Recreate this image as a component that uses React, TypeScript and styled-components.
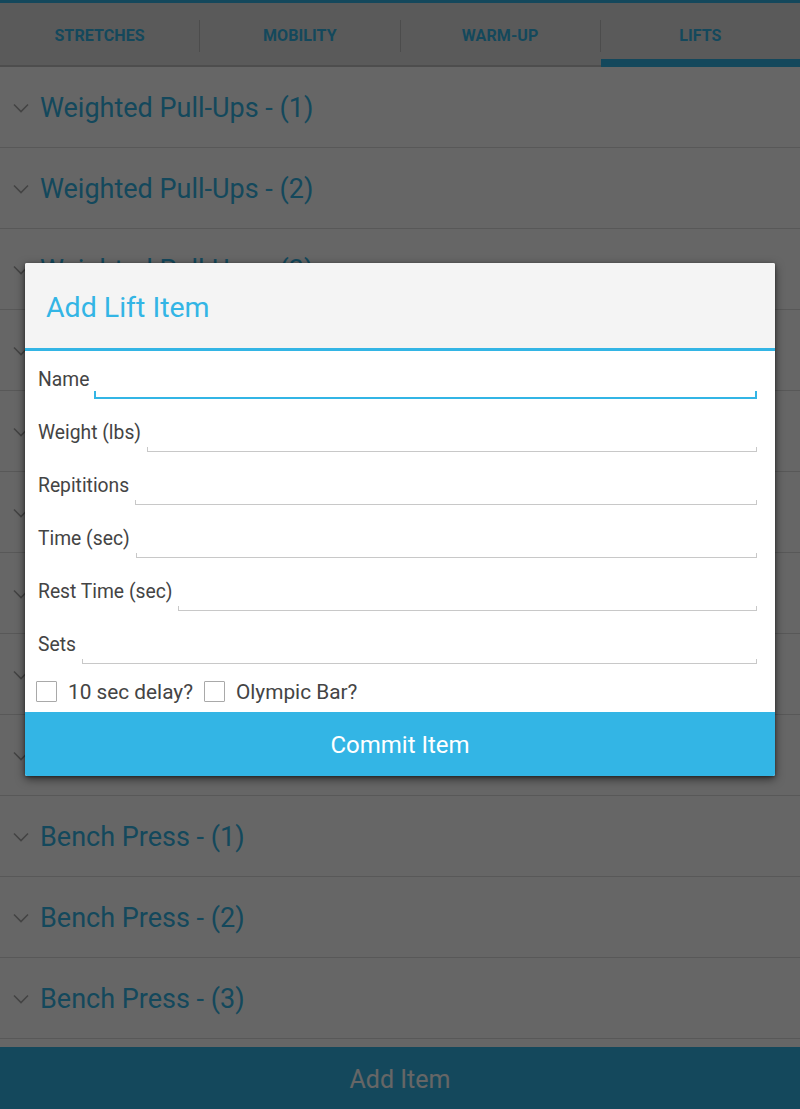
import React from "react";
import styled, { createGlobalStyle } from "styled-components";

const BLUE = "#33b5e5";

const Global = createGlobalStyle`
  html, body { margin: 0; padding: 0; }
  body { font-family: Roboto, "Noto Sans", "Liberation Sans", sans-serif; background: #ffffff; }
  * { box-sizing: border-box; }
`;

const Page = styled.div`
  position: relative;
  width: 800px;
  height: 1109px;
  display: flex;
  flex-direction: column;
  overflow: hidden;
  background: #ffffff;
`;

const TopStrip = styled.div`
  height: 3px;
  background: ${BLUE};
  flex: none;
`;

const TabBar = styled.div`
  height: 64px;
  flex: none;
  display: flex;
  align-items: stretch;
  background: #e1e1e1;
  border-bottom: 2px solid #c0c0c0;
`;

const Tab = styled.div<{ $active?: boolean }>`
  flex: 1;
  position: relative;
  display: flex;
  align-items: center;
  justify-content: center;
  padding-top: 2px;
  font-size: 16px;
  font-weight: 700;
  color: ${BLUE};
  letter-spacing: 0.1px;
  &::after {
    content: "";
    display: ${(p) => (p.$active ? "block" : "none")};
    position: absolute;
    left: 0;
    right: 0;
    bottom: -2px;
    height: 8px;
    background: ${BLUE};
  }
`;

const TabDivider = styled.div`
  width: 1px;
  height: 32px;
  align-self: center;
  margin-top: 4px;
  background: #bebebe;
  flex: none;
`;

const List = styled.div`
  flex: 1;
  overflow: hidden;
  display: flex;
  flex-direction: column;
`;

const Row = styled.div`
  height: 81px;
  flex: none;
  display: flex;
  align-items: center;
  border-bottom: 1px solid #dcdcdc;
  padding-left: 13px;
  padding-top: 2px;
  gap: 11px;
`;

const RowTitle = styled.span`
  font-size: 27px;
  color: ${BLUE};
  line-height: 30px;
`;

const BottomBar = styled.div`
  height: 62px;
  flex: none;
  background: ${BLUE};
  display: flex;
  align-items: center;
  justify-content: center;
  color: #ffffff;
  font-size: 25px;
  padding-top: 2px;
`;

const Overlay = styled.div`
  position: absolute;
  inset: 0;
  background: rgba(0, 0, 0, 0.6);
  display: flex;
  flex-direction: column;
  padding: 263px 25px 0;
`;

const Dialog = styled.div`
  width: 750px;
  background: #ffffff;
  border-radius: 2px;
  overflow: hidden;
  box-shadow: 0 3px 10px rgba(0, 0, 0, 0.55), 0 1px 3px rgba(0, 0, 0, 0.4);
  display: flex;
  flex-direction: column;
`;

const DialogHeader = styled.div`
  height: 88px;
  background: #f4f4f4;
  border-bottom: 3px solid ${BLUE};
  display: flex;
  align-items: center;
  padding-left: 21px;
  padding-top: 4px;
  font-size: 28.5px;
  color: ${BLUE};
`;

const Body = styled.div`
  padding-top: 3px;
  display: flex;
  flex-direction: column;
`;

const FieldRow = styled.div`
  height: 53px;
  display: flex;
  align-items: flex-start;
  padding: 0 18px 0 13px;
`;

const FieldLabel = styled.span`
  margin-top: 15px;
  font-size: 19.3px;
  line-height: 22px;
  color: #444444;
  flex: none;
`;

const FieldInput = styled.div<{ $focused?: boolean }>`
  flex: 1;
  margin-left: ${(p) => (p.$focused ? "5px" : "6px")};
  margin-top: ${(p) => (p.$focused ? "37px" : "40px")};
  height: ${(p) => (p.$focused ? "8px" : "5px")};
  border: ${(p) => (p.$focused ? `2px solid ${BLUE}` : "1px solid #c8c8c8")};
  border-top: none;
`;

const CheckRow = styled.div`
  height: 40px;
  display: flex;
  align-items: center;
  padding-left: 11px;
  padding-bottom: 1px;
`;

const CheckBox = styled.span`
  width: 21px;
  height: 21px;
  border: 1.5px solid #a9a9a9;
  border-radius: 1px;
  flex: none;
  margin-right: 11px;
`;

const CheckLabel = styled.span`
  font-size: 20.8px;
  color: #444444;
  margin-right: 11px;
`;

const CommitButton = styled.div`
  height: 64px;
  background: ${BLUE};
  color: #ffffff;
  font-size: 24px;
  display: flex;
  align-items: center;
  justify-content: center;
  padding-top: 1px;
`;

const Chevron = () => (
  <svg width="16" height="10" viewBox="0 0 16 10" style={{ flex: "none" }}>
    <path d="M1 1.5 L8 8.5 L15 1.5" fill="none" stroke="#a8a8a8" strokeWidth="1.6" />
  </svg>
);

const rows = [
  "Weighted Pull-Ups - (1)",
  "Weighted Pull-Ups - (2)",
  "Weighted Pull-Ups - (3)",
  "Squat - (1)",
  "Squat - (2)",
  "Squat - (3)",
  "Deadlift - (1)",
  "Deadlift - (2)",
  "Deadlift - (3)",
  "Bench Press - (1)",
  "Bench Press - (2)",
  "Bench Press - (3)",
];

const fields = ["Name", "Weight (lbs)", "Repititions", "Time (sec)", "Rest Time (sec)", "Sets"];

export default function App() {
  return (
    <>
      <Global />
      <Page>
        <TopStrip />
        <TabBar>
          <Tab>STRETCHES</Tab>
          <TabDivider />
          <Tab>MOBILITY</Tab>
          <TabDivider />
          <Tab>WARM-UP</Tab>
          <TabDivider />
          <Tab $active>LIFTS</Tab>
        </TabBar>
        <List>
          {rows.map((r) => (
            <Row key={r}>
              <Chevron />
              <RowTitle>{r}</RowTitle>
            </Row>
          ))}
        </List>
        <BottomBar>Add Item</BottomBar>
        <Overlay>
          <Dialog>
            <DialogHeader>Add Lift Item</DialogHeader>
            <Body>
              {fields.map((f, i) => (
                <FieldRow key={f}>
                  <FieldLabel>{f}</FieldLabel>
                  <FieldInput $focused={i === 0} />
                </FieldRow>
              ))}
              <CheckRow>
                <CheckBox />
                <CheckLabel>10 sec delay?</CheckLabel>
                <CheckBox />
                <CheckLabel>Olympic Bar?</CheckLabel>
              </CheckRow>
            </Body>
            <CommitButton>Commit Item</CommitButton>
          </Dialog>
        </Overlay>
      </Page>
    </>
  );
}
